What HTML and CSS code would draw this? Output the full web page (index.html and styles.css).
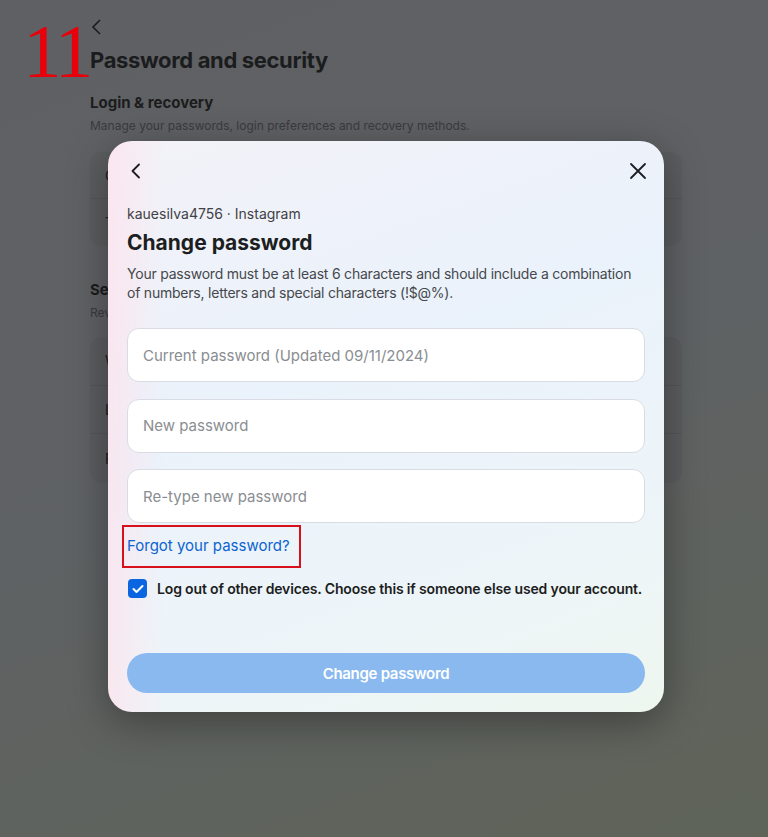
FILE: index.html
```html
<!DOCTYPE html>
<html>
<head>
<meta charset="utf-8">
<link rel="stylesheet" href="styles.css">
</head>
<body>
<div class="page">
  <div class="back-top">
    <svg width="12" height="18" viewBox="0 0 12 18"><path d="M10 2 L3 9 L10 16" fill="none" stroke="#1b1c1d" stroke-width="1.6"/></svg>
  </div>
  <h1 class="page-title">Password and security</h1>
  <h2 class="sec-title">Login &amp; recovery</h2>
  <p class="sec-sub">Manage your passwords, login preferences and recovery methods.</p>
  <div class="card">
    <div class="row">Change password</div>
    <div class="row">Two-factor authentication</div>
  </div>
  <h2 class="sec-title sec2">Security checks</h2>
  <p class="sec-sub sub2">Review security issues by running checks across apps, devices and emails sent.</p>
  <div class="card card2">
    <div class="row">Where you're logged in</div>
    <div class="row">Login alerts</div>
    <div class="row">Recent emails</div>
  </div>
</div>

<div class="annot">11</div>

<div class="modal">
  <div class="modal-head">
    <svg width="16" height="18" viewBox="0 0 16 18"><path d="M11 2.5 L4.5 9 L11 15.5" fill="none" stroke="#1c1e21" stroke-width="1.8" stroke-linecap="round" stroke-linejoin="round"/></svg>
    <svg width="20" height="20" viewBox="0 0 20 20"><path d="M3 3 L17 17 M17 3 L3 17" fill="none" stroke="#1c1e21" stroke-width="1.8" stroke-linecap="round"/></svg>
  </div>
  <div class="acct">kauesilva4756 · Instagram</div>
  <div class="m-title">Change password</div>
  <p class="desc">Your password must be at least 6 characters and should include a combination of numbers, letters and special characters (!$@%).</p>
  <div class="fields">
    <div class="field">Current password (Updated 09/11/2024)</div>
    <div class="field">New password</div>
    <div class="field">Re-type new password</div>
  </div>
  <div class="forgot-wrap"><span class="forgot">Forgot your password?</span></div>
  <div class="check-row">
    <span class="checkbox"><svg width="12" height="10" viewBox="0 0 12 10"><path d="M1.5 5 L4.5 8 L10.5 2" fill="none" stroke="#fff" stroke-width="2" stroke-linecap="round" stroke-linejoin="round"/></svg></span>
    <span class="check-label">Log out of other devices. Choose this if someone else used your account.</span>
  </div>
  <div class="btn">Change password</div>
</div>
</body>
</html>
```

FILE: styles.css
```css
* { box-sizing: border-box; }
html, body { margin: 0; padding: 0; }
body {
  width: 768px;
  height: 837px;
  overflow: hidden;
  font-family: "Inter", "Noto Sans", sans-serif;
  background: linear-gradient(160deg, #5f6063 0%, #5f6264 50%, #5f6459 100%);
  position: relative;
}
.page {
  padding: 18px 86px 0 90px;
}
.back-top { height: 20px; }
.page-title {
  margin: 8px 0 0;
  font-size: 22px;
  font-weight: 700;
  color: #1b1c1d;
  line-height: 28px;
  letter-spacing: -0.35px;
}
.sec-title {
  margin: 19px 0 0;
  font-size: 15px;
  font-weight: 700;
  color: #1b1c1d;
  line-height: 20px;
}
.sec2 { margin-top: 34px; }
.sec-sub {
  margin: 5px 0 0;
  font-size: 12px;
  color: #3a3b3d;
  line-height: 16px;
}
.card {
  margin-top: 18px;
  background: #5b5d5f;
  border-radius: 12px;
  overflow: hidden;
}
.card2 { margin-top: 16px; }
.row {
  height: 47px;
  padding: 0 15px;
  display: flex;
  align-items: center;
  font-size: 14px;
  color: #1b1c1d;
  border-bottom: 1px solid #545658;
}
.card2 .row { height: 48.7px; }
.row:last-child { border-bottom: none; }

.annot {
  position: absolute;
  left: 23px;
  top: 13px;
  font-family: "Liberation Serif", serif;
  font-size: 77px;
  line-height: 77px;
  color: #e8000b;
  letter-spacing: -4px;
}

.modal {
  position: absolute;
  left: 108px;
  top: 141px;
  width: 556px;
  height: 571px;
  border-radius: 24px;
  padding: 0 19px;
  background:
    linear-gradient(90deg, rgba(255,225,235,0.7) 0%, rgba(255,240,245,0) 10%),
    linear-gradient(160deg, #f3f2f8 0%, #eaf2fb 40%, #eef5f9 75%, #eef6ef 100%);
  box-shadow: 0 10px 40px rgba(0,0,0,0.35);
}
.modal-head {
  height: 60px;
  display: flex;
  align-items: center;
  justify-content: space-between;
  padding: 0 0 0 1px;
  margin-right: -3px;
}
.acct {
  margin-top: 4px;
  font-size: 14px;
  line-height: 18px;
  color: #3f4145;
}
.m-title {
  margin-top: 7px;
  font-size: 21px;
  font-weight: 700;
  color: #1c1e21;
  line-height: 26px;
}
.desc {
  margin: 8px 0 0;
  font-size: 14px;
  line-height: 19px;
  color: #46484c;
  letter-spacing: -0.22px;
}
.fields {
  margin-top: 26px;
  display: flex;
  flex-direction: column;
  gap: 16.5px;
}
.field {
  height: 54px;
  background: #fff;
  border: 1px solid #d9dde3;
  border-radius: 12px;
  display: flex;
  align-items: center;
  padding: 0 15px;
  font-size: 15px;
  color: #8a8d91;
}
.forgot-wrap {
  margin: 2px 0 0 -5px;
  width: 179px;
  height: 43px;
  border: 2px solid #d7101b;
  display: flex;
  align-items: center;
  padding-left: 3px;
  padding-bottom: 3px;
}
.forgot {
  font-size: 15px;
  color: #0a64d2;
}
.check-row {
  margin-top: 11px;
  display: flex;
  align-items: center;
  gap: 10px;
  padding-left: 1px;
}
.checkbox {
  flex: none;
  width: 19px;
  height: 19px;
  border-radius: 4px;
  background: #0a66e0;
  display: flex;
  align-items: center;
  justify-content: center;
}
.check-label {
  font-size: 14px;
  font-weight: 600;
  color: #1c1e21;
  white-space: nowrap;
  letter-spacing: -0.15px;
}
.btn {
  margin-top: 55px;
  height: 40px;
  border-radius: 20px;
  background: #8ab9ef;
  color: #ffffff;
  font-size: 15px;
  font-weight: 600;
  letter-spacing: -0.3px;
  display: flex;
  align-items: center;
  justify-content: center;
}
```
